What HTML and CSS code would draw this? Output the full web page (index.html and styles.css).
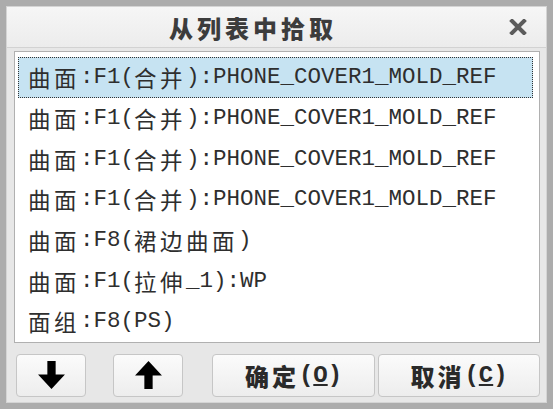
FILE: index.html
```html
<!DOCTYPE html>
<html lang="zh">
<head>
    <meta charset="UTF-8">
    <title>从列表中拾取</title>
    <link rel="stylesheet" href="styles.css">
</head>
<body>
    <div class="dialog">
        <div class="titlebar">
            <span class="title">从列表中拾取</span>
            <span class="close">
                <svg width="18" height="16" viewBox="0 0 18 16">
                    <path d="M3 2 L15 14 M15 2 L3 14" stroke="#5c5c5c" stroke-width="4" stroke-linecap="square"/>
                </svg>
            </span>
        </div>

        <div class="list">
            <div class="row selected"><span class="cj">曲面</span>:F1(<span class="cj">合并</span>):PHONE_COVER1_MOLD_REF</div>
            <div class="row"><span class="cj">曲面</span>:F1(<span class="cj">合并</span>):PHONE_COVER1_MOLD_REF</div>
            <div class="row"><span class="cj">曲面</span>:F1(<span class="cj">合并</span>):PHONE_COVER1_MOLD_REF</div>
            <div class="row"><span class="cj">曲面</span>:F1(<span class="cj">合并</span>):PHONE_COVER1_MOLD_REF</div>
            <div class="row"><span class="cj">曲面</span>:F8(<span class="cj">裙边曲面</span>)</div>
            <div class="row"><span class="cj">曲面</span>:F1(<span class="cj">拉伸</span>_1):WP</div>
            <div class="row"><span class="cj">面组</span>:F8(PS)</div>
        </div>

        <div class="buttons">
            <button class="btn btn-down">
                <svg width="29" height="29" viewBox="0 0 28 28">
                    <path d="M10 0 H18 V13 H27 L14 27 L1 13 H10 Z" fill="#000"/>
                </svg>
            </button>
            <button class="btn btn-up">
                <svg width="29" height="29" viewBox="0 0 28 28">
                    <path d="M10 27 H18 V14 H27 L14 0 L1 14 H10 Z" fill="#000"/>
                </svg>
            </button>
            <button class="btn btn-ok"><span class="cj">确定</span>(<u>O</u>)</button>
            <button class="btn btn-cancel"><span class="cj">取消</span>(<u>C</u>)</button>
        </div>
    </div>
</body>
</html>
```

FILE: styles.css
```css
body {
    margin: 0;
    background-color: #acacac;
}
.dialog {
    width: 553px;
    height: 409px;
    box-sizing: border-box;
    border: 6px solid #acacac;
    padding: 1px;
    background-color: #e7e7e7;
    box-shadow: inset 0 0 0 1px #d4d4d4;
    display: flex;
    flex-direction: column;
}
.titlebar {
    height: 41px;
    flex-shrink: 0;
    display: flex;
    align-items: center;
    background: linear-gradient(#f6f6f6, #ececec);
    border-bottom: 1px solid #d2d2d2;
    box-sizing: border-box;
}
.title {
    flex: 1;
    text-align: center;
    font-family: "Noto Sans CJK SC", sans-serif;
    font-weight: 900;
    font-size: 24px;
    letter-spacing: 4px;
    color: #3c3c3c;
    padding-left: 4px;
}
.close {
    width: 45px;
    display: flex;
    justify-content: center;
    padding-right: 6px;
}
.list {
    margin: 3px 6px 0 7px;
    height: 292px;
    flex-shrink: 0;
    box-sizing: border-box;
    border: 1px solid #b0b0b0;
    background-color: #ffffff;
    padding: 5px 6px 0 3px;
}
.row {
    height: 40.7px;
    box-sizing: border-box;
    border: 1px solid transparent;
    padding-left: 9px;
    display: flex;
    align-items: center;
    font-family: "Liberation Mono", "Noto Sans CJK SC", monospace;
    font-size: 22.5px;
    color: #2e2e2e;
    white-space: pre;
}
.row.selected {
    background-color: #c6e3f2;
    border: 1px dotted #333333;
}
.cj {
    font-family: "Noto Sans CJK SC", sans-serif;
    letter-spacing: 3.5px;
}
.buttons {
    display: flex;
    margin-top: 11px;
    padding-left: 9px;
    height: 43px;
}
.btn {
    height: 43px;
    box-sizing: border-box;
    border: 1px solid #c6c6c6;
    border-radius: 4px;
    background: linear-gradient(#fbfbfb, #ededed);
    display: flex;
    align-items: center;
    justify-content: center;
    padding: 0;
    font-family: "Liberation Mono", "Noto Sans CJK SC", monospace;
    font-weight: bold;
    font-size: 24px;
    color: #2a2a2a;
}
.btn .cj {
    font-weight: 900;
    letter-spacing: 3px;
}
.btn-down {
    width: 70px;
    margin-right: 27px;
}
.btn-up {
    width: 70px;
    margin-right: 29px;
}
.btn-ok {
    width: 163px;
    margin-right: 3px;
}
.btn-cancel {
    width: 162px;
}
```
